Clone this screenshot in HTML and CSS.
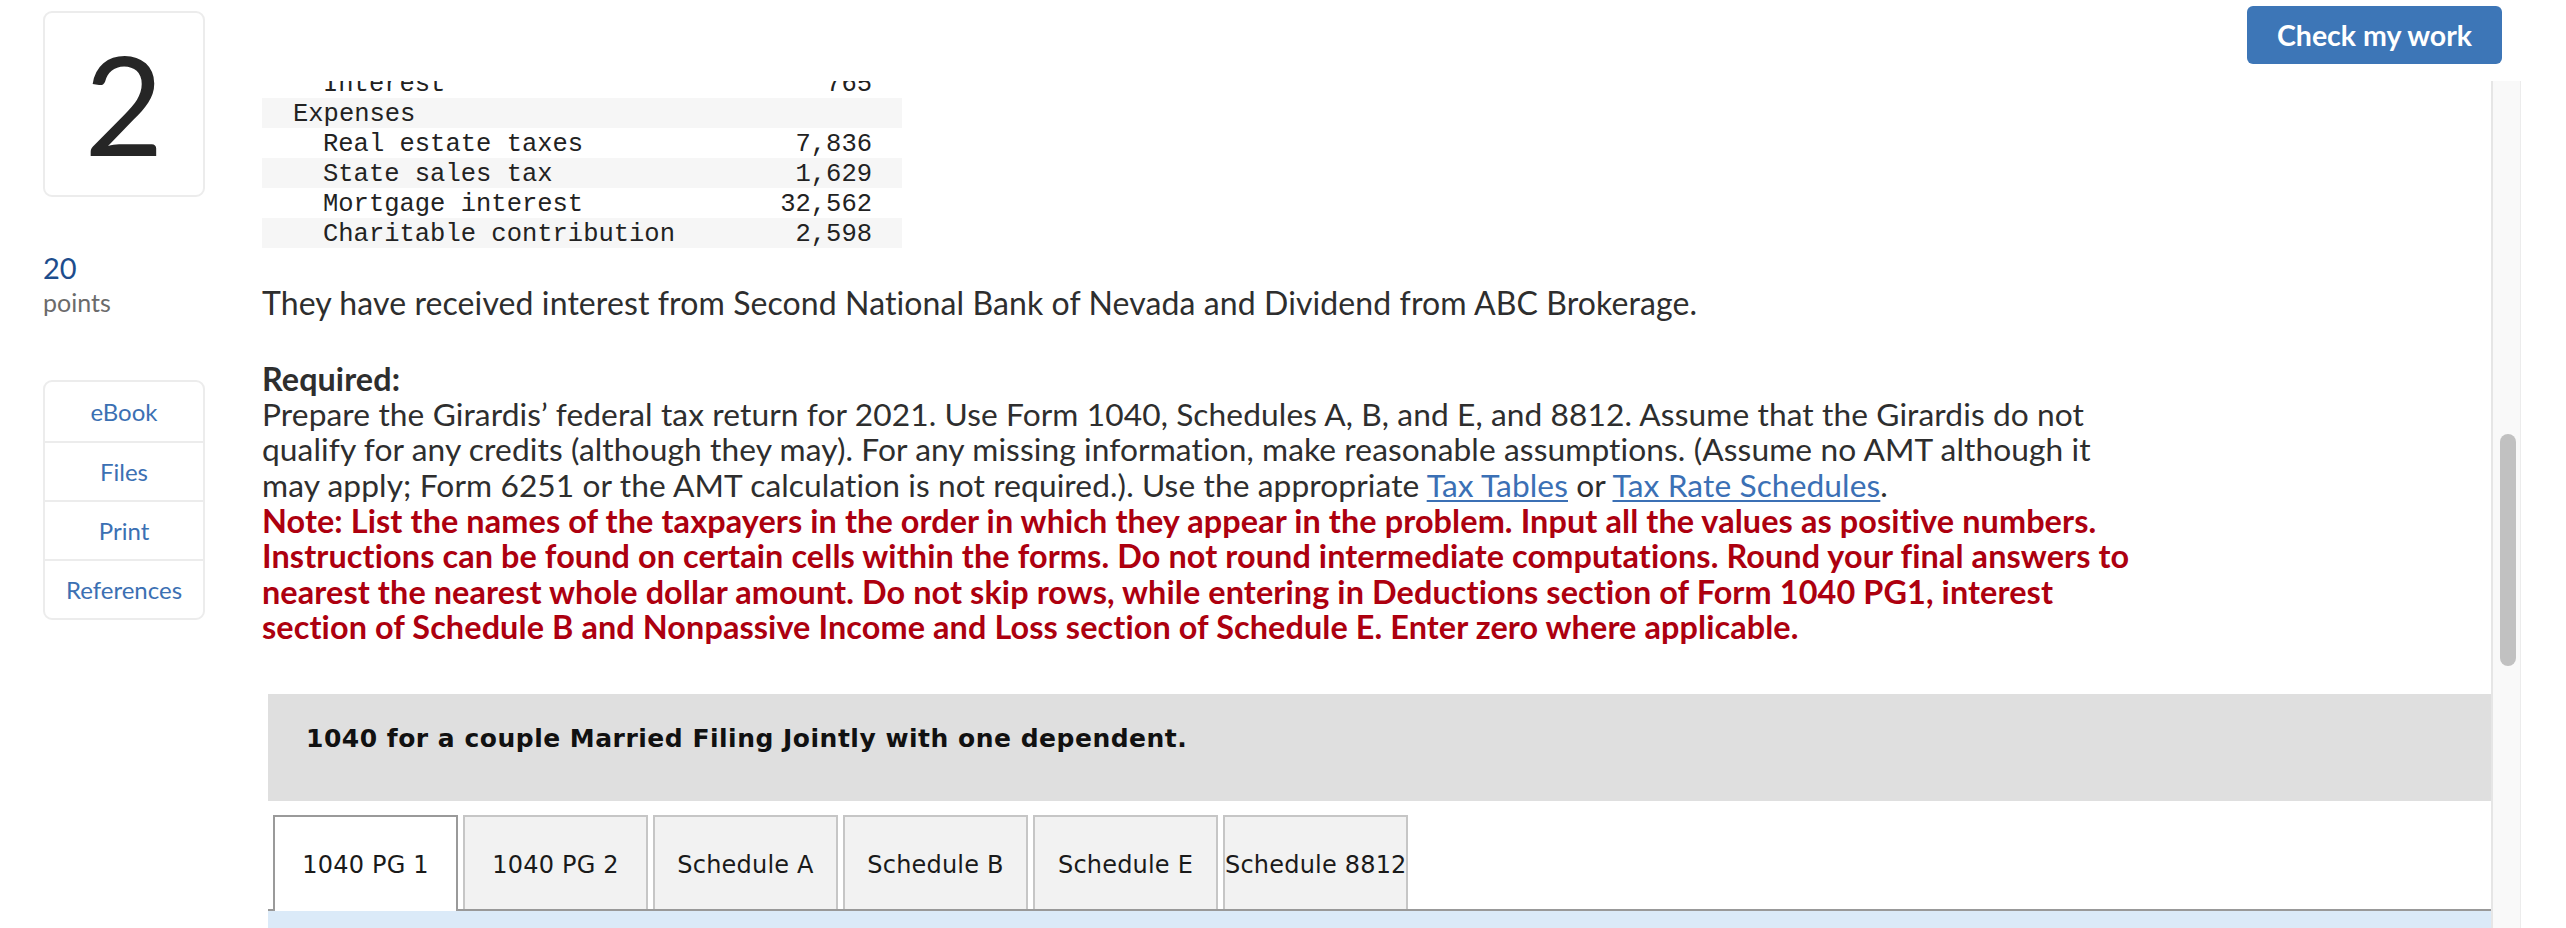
FILE: index.html
```html
<!DOCTYPE html>
<html lang="en">
<head>
<meta charset="utf-8">
<title>Question 2</title>
<link rel="stylesheet" href="styles.css">
</head>
<body>
<div class="page">
  <aside class="side">
    <div class="qnum">2</div>
    <div class="points">
      <span class="pts-num">20</span>
      <span class="pts-label">points</span>
    </div>
    <nav class="tools">
      <a class="tool">eBook</a>
      <a class="tool">Files</a>
      <a class="tool">Print</a>
      <a class="tool">References</a>
    </nav>
  </aside>
  <main class="main">
    <header class="topbar">
      <button class="check">Check my work</button>
    </header>
    <div class="viewport">
      <div class="scroll">
        <div class="content">
          <table class="data">
            <tr><td class="lbl sub">Interest</td><td class="num">765</td></tr>
            <tr class="alt"><td class="lbl">Expenses</td><td class="num"></td></tr>
            <tr><td class="lbl sub">Real estate taxes</td><td class="num">7,836</td></tr>
            <tr class="alt"><td class="lbl sub">State sales tax</td><td class="num">1,629</td></tr>
            <tr><td class="lbl sub">Mortgage interest</td><td class="num">32,562</td></tr>
            <tr class="alt"><td class="lbl sub">Charitable contribution</td><td class="num">2,598</td></tr>
          </table>
          <p class="intro">They have received interest from Second National Bank of Nevada and Dividend from ABC Brokerage.</p>
          <div class="req">
            <p class="req-title">Required:</p>
            <p class="req-text">Prepare the Girardis’ federal tax return for 2021. Use Form 1040, Schedules A, B, and E, and 8812. Assume that the Girardis do not qualify for any credits (although they may). For any missing information, make reasonable assumptions. (Assume no AMT although it may apply; Form 6251 or the AMT calculation is not required.). Use the appropriate <a class="link">Tax Tables</a> or <a class="link">Tax Rate Schedules</a>.</p>
            <p class="note">Note: List the names of the taxpayers in the order in which they appear in the problem. Input all the values as positive numbers. Instructions can be found on certain cells within the forms. Do not round intermediate computations. Round your final answers to nearest the nearest whole dollar amount. Do not skip rows, while entering in Deductions section of Form 1040 PG1, interest section of Schedule B and Nonpassive Income and Loss section of Schedule E. Enter zero where applicable.</p>
          </div>
          <div class="band">1040 for a couple Married Filing Jointly with one dependent.</div>
          <div class="tabs">
            <div class="tab active">1040 PG 1</div>
            <div class="tab">1040 PG 2</div>
            <div class="tab">Schedule A</div>
            <div class="tab">Schedule B</div>
            <div class="tab">Schedule E</div>
            <div class="tab">Schedule 8812</div>
          </div>
          <div class="panel"></div>
        </div>
      </div>
      <div class="scrollbar"><div class="thumb"></div></div>
    </div>
  </main>
</div>
</body>
</html>
```
FILE: styles.css
```css
* { box-sizing: border-box; }
html, body { margin: 0; padding: 0; }
body {
  background: #fff;
  font-family: Lato, "Open Sans", Arial, sans-serif;
  color: #333;
  height: 928px;
  overflow: hidden;
}
.page {
  display: flex;
  height: 928px;
}

/* left column */
.side {
  width: 162px;
  margin-left: 43px;
  margin-right: 35px;
  padding-top: 11px;
  flex-shrink: 0;
}
.qnum {
  height: 186px;
  border: 2px solid #ececec;
  border-radius: 9px;
  display: flex;
  align-items: center;
  justify-content: center;
  font-size: 137px;
  line-height: 1;
  color: #262626;
  padding-bottom: 2px;
}
.points {
  margin-top: 53px;
  display: flex;
  flex-direction: column;
}
.pts-num {
  font-size: 29px;
  line-height: 35px;
  color: #1d4d8d;
}
.pts-label {
  font-size: 25px;
  line-height: 34px;
  color: #6b6b6b;
}
.tools {
  margin-top: 61px;
  border: 2px solid #ececec;
  border-radius: 9px;
  display: flex;
  flex-direction: column;
}
.tool {
  height: 59px;
  display: flex;
  align-items: center;
  justify-content: center;
  font-size: 24px;
  color: #3b70b3;
}
.tool + .tool { border-top: 2px solid #ececec; }

/* main */
.main {
  flex: 1;
  display: flex;
  flex-direction: column;
  padding-right: 45px;
  min-width: 0;
}
.topbar {
  height: 81px;
  display: flex;
  justify-content: flex-end;
  align-items: flex-start;
  padding-top: 6px;
  padding-right: 19px;
  flex-shrink: 0;
}
.check {
  width: 255px;
  height: 58px;
  border: none;
  border-radius: 6px;
  background: #3d76b7;
  color: #fff;
  font-family: Lato, Arial, sans-serif;
  font-weight: 700;
  font-size: 28.5px;
  padding: 0;
}
.viewport {
  flex: 1;
  display: flex;
  min-height: 0;
}
.scroll {
  flex: 1;
  overflow: hidden;
  min-width: 0;
}
.content {
  margin-top: -13px;
  padding-left: 22px;
}

/* data table */
.data {
  border-collapse: collapse;
  width: 640px;
  font-family: "Liberation Mono", "Courier New", monospace;
  font-size: 25.5px;
  color: #222;
}
.data td {
  height: 27px;
  line-height: 27px;
  padding: 3px 0 0 0;
  white-space: pre;
}
.data tr.alt { background: #f6f6f6; }
.lbl { padding-left: 31px !important; }
.lbl.sub { padding-left: 61px !important; }
.num { text-align: right; padding-right: 30px !important; }

/* text */
.intro, .req-title, .req-text, .note {
  margin: 0;
  font-size: 31.7px;
  letter-spacing: 0.1px;
  line-height: 35.4px;
  max-width: 1880px;
}
.intro {
  margin-top: 37px;
  margin-bottom: 41px;
  color: #2e2e2e;
  font-size: 32px;
}
.req-title { font-weight: 700; color: #2e2e2e; font-size: 32.3px; }
.req-text { color: #2e2e2e; }
.link {
  color: #3b70b5;
  text-decoration: underline;
  text-decoration-thickness: 2px;
  text-underline-offset: 3px;
}
.note {
  color: #ad000f;
  font-weight: 700;
  font-size: 32.4px;
}

/* band */
.band {
  margin-top: 49px;
  margin-left: 6px;
  height: 107px;
  background: #dfdfdf;
  padding: 30px 0 0 38px;
  font-family: "DejaVu Sans", Verdana, sans-serif;
  font-weight: 700;
  font-size: 25px;
  letter-spacing: 0.5px;
  line-height: 29px;
  color: #111;
}

/* tabs */
.tabs {
  margin-top: 14px;
  margin-left: 6px;
  padding-left: 5px;
  display: flex;
  align-items: flex-start;
  gap: 5px;
  border-bottom: 2px solid #999;
  height: 96px;
}
.tab {
  width: 185px;
  height: 94px;
  border: 2px solid #c6c6c6;
  border-bottom: none;
  background: #f2f2f2;
  text-align: center;
  padding-top: 34px;
  font-family: "DejaVu Sans", Verdana, sans-serif;
  font-size: 24px;
  letter-spacing: 0.2px;
  line-height: 28px;
  color: #1a1a1a;
  white-space: nowrap;
}
.tab.active {
  background: #fff;
  border-color: #9a9a9a;
  height: 96px;
}
.panel {
  margin-left: 6px;
  height: 60px;
  background: #dbeaf8;
}

/* scrollbar */
.scrollbar {
  width: 30px;
  flex-shrink: 0;
  background: #f9f9f9;
  border-left: 2px solid #e6e6e6;
  border-right: 1px solid #ececec;
  padding-top: 353px;
  padding-left: 7px;
}
.thumb {
  width: 16px;
  height: 232px;
  border-radius: 8px;
  background: #c1c1c1;
}
```
